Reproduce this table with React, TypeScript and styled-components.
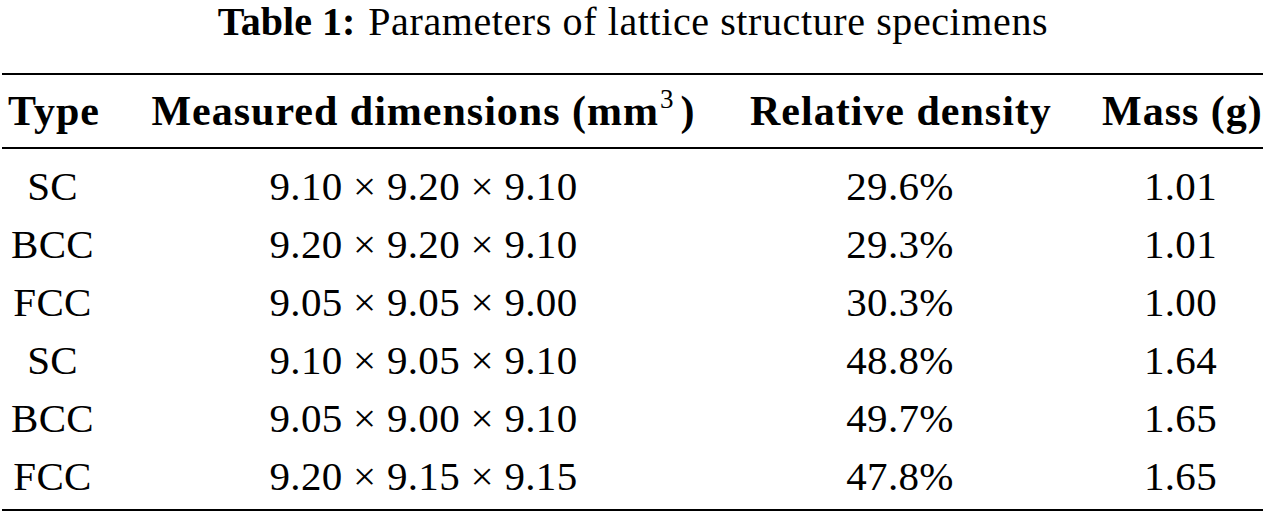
import React from "react";
import styled, { createGlobalStyle } from "styled-components";

const GlobalStyle = createGlobalStyle`
  html, body {
    margin: 0;
    padding: 0;
    background: #ffffff;
  }
  body {
    font-family: "Liberation Serif", "Times New Roman", serif;
    color: #000000;
    width: 1266px;
  }
`;

const Page = styled.div`
  width: 1266px;
  height: 515px;
  display: flex;
  flex-direction: column;
  align-items: flex-start;
`;

const Caption = styled.div`
  align-self: stretch;
  display: flex;
  justify-content: center;
  font-size: 40px;
  line-height: 44px;
  margin-bottom: 29px;
  white-space: nowrap;
`;

const CaptionLabel = styled.span`
  font-weight: 700;
  margin-right: 13px;
`;

const CaptionText = styled.span`
  font-weight: 400;
  letter-spacing: 0.6px;
`;

const Table = styled.div`
  margin-left: 2px;
  width: 1261px;
  border-top: 2px solid #000;
  border-bottom: 2px solid #000;
  display: flex;
  flex-direction: column;
`;

const Row = styled.div<{ $header?: boolean }>`
  display: grid;
  grid-template-columns: 89px 549px 300px 157px;
  column-gap: 52px;
  padding-left: 6px;
  height: ${(p) => (p.$header ? "72px" : "58px")};
  line-height: ${(p) => (p.$header ? "72px" : "58px")};
  font-size: ${(p) => (p.$header ? "42px" : "41px")};
  font-weight: ${(p) => (p.$header ? 700 : 400)};
  letter-spacing: ${(p) => (p.$header ? "1px" : "0.3px")};
  border-bottom: ${(p) => (p.$header ? "2px solid #000" : "none")};
`;

const Body = styled.div`
  display: flex;
  flex-direction: column;
  padding-top: 8px;
  padding-bottom: 4px;
`;

const Cell = styled.div`
  text-align: center;
  white-space: nowrap;
`;

const Sup = styled.sup`
  font-weight: 400;
  font-size: 27px;
  line-height: 0;
  vertical-align: 0;
  position: relative;
  top: -17px;
  margin-left: 1px;
  margin-right: 6px;
`;

const rows: [string, string, string, string][] = [
  ["SC", "9.10 × 9.20 × 9.10", "29.6%", "1.01"],
  ["BCC", "9.20 × 9.20 × 9.10", "29.3%", "1.01"],
  ["FCC", "9.05 × 9.05 × 9.00", "30.3%", "1.00"],
  ["SC", "9.10 × 9.05 × 9.10", "48.8%", "1.64"],
  ["BCC", "9.05 × 9.00 × 9.10", "49.7%", "1.65"],
  ["FCC", "9.20 × 9.15 × 9.15", "47.8%", "1.65"],
];

export default function App() {
  return (
    <>
      <GlobalStyle />
      <Page>
        <Caption>
          <CaptionLabel>Table 1:</CaptionLabel>
          <CaptionText>Parameters of lattice structure specimens</CaptionText>
        </Caption>
        <Table>
          <Row $header>
            <Cell>Type</Cell>
            <Cell>
              Measured dimensions (mm<Sup>3</Sup>)
            </Cell>
            <Cell>Relative density</Cell>
            <Cell>Mass (g)</Cell>
          </Row>
          <Body>
            {rows.map((r, i) => (
              <Row key={i}>
                <Cell>{r[0]}</Cell>
                <Cell>{r[1]}</Cell>
                <Cell>{r[2]}</Cell>
                <Cell>{r[3]}</Cell>
              </Row>
            ))}
          </Body>
        </Table>
      </Page>
    </>
  );
}
